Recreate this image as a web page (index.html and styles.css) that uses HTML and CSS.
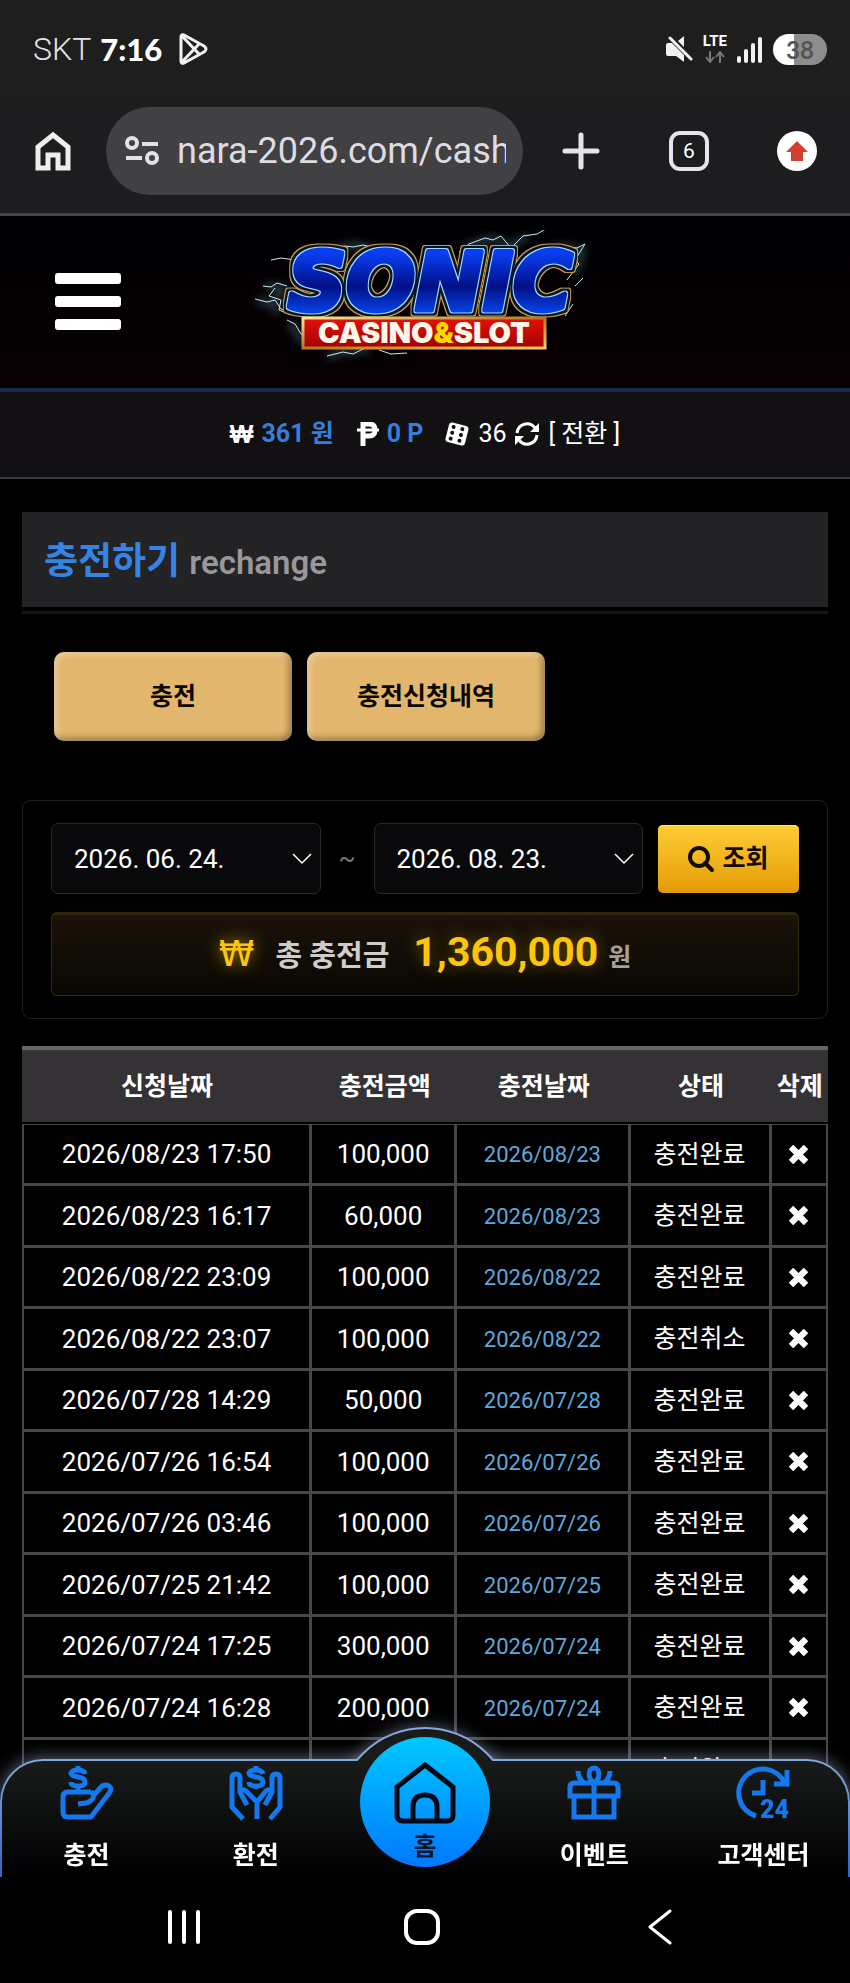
FILE: index.html
```html
<!DOCTYPE html>
<html lang="ko">
<head>
  <meta charset="UTF-8" />
  <meta name="viewport" content="width=device-width, initial-scale=1.0"/>
  <title>충전하기</title>
  <link rel="stylesheet" href="styles.css">
</head>
<body>

  <!-- shared icons -->
  <svg class="sprite" aria-hidden="true">
    <symbol id="x" viewBox="0 0 18 18"><path d="M4 4l10 10M14 4L4 14" stroke="#fff" stroke-width="6" stroke-linecap="square"/></symbol>
    <symbol id="down" viewBox="0 0 20 12"><path d="M1 1l9 9 9-9" fill="none" stroke="#fff" stroke-width="1.5"/></symbol>
  </svg>

  <div class="status">
    <span class="carrier">SKT</span>
    <span class="time">7:16</span>
    <svg class="play" width="30" height="32" viewBox="0 0 30 32" fill="none" stroke="#f0f0f0" stroke-width="3" stroke-linejoin="round"><path d="M2 4q0-3 3-2l20 11q4 3 0 6L5 30q-3 1-3-2zM3 3l17 18M3 29l17-18"/></svg>
    <div class="status-right">
      <svg width="28" height="28" viewBox="0 0 28 28"><path d="M1 10q0-2 2-2h4l12 12v7l-8-6H3q-2 0-2-2zM13 6l6-5v11z" fill="#f2f2f2"/><path d="M5 3l21 21" stroke="#f2f2f2" stroke-width="3" stroke-linecap="round"/></svg>
      <div class="lte">LTE
        <svg width="20" height="12" viewBox="0 0 20 12" fill="none" stroke="#777" stroke-width="2"><path d="M5 0v10M1 6l4 5 4-5M15 12V2M11 6l4-5 4 5"/></svg>
      </div>
      <svg width="26" height="27" viewBox="0 0 26 27" stroke="#f2f2f2" stroke-width="4" stroke-linecap="round"><path d="M2 22v3M9 15v10M16 9v16M23 3v22"/></svg>
      <span class="battery">38</span>
    </div>
  </div>

  <div class="browser">
    <button class="plain" aria-label="홈페이지"><svg width="42" height="42" viewBox="0 0 42 42" fill="none" stroke="#eee" stroke-width="5"><path d="M6 17L21 5l15 12v21H26V25H16v13H6z"/></svg></button>
    <div class="url">
      <svg width="34" height="30" viewBox="0 0 34 30" fill="none" stroke="#e3e1e6" stroke-width="4"><circle cx="7" cy="7" r="5"/><circle cx="27" cy="22" r="5"/><path d="M17 8h16M1 22h16"/></svg>
      <input type="text" value="nara-2026.com/cash" aria-label="주소">
    </div>
    <div class="browser-right">
      <button class="plain" aria-label="새 탭"><svg width="40" height="40" viewBox="0 0 40 40" stroke="#e6e4ea" stroke-width="5" stroke-linecap="round"><path d="M20 4v32M4 20h32"/></svg></button>
      <button class="tabs">6</button>
      <button class="plain" aria-label="업데이트"><svg width="40" height="40" viewBox="0 0 40 40"><circle cx="20" cy="20" r="20" fill="#fff"/><path d="M20 10l11 11h-5v9H14v-9H9z" fill="#d23f31"/></svg></button>
    </div>
  </div>

  <header class="header">
    <button class="menu" aria-label="메뉴"><span></span><span></span><span></span></button>
    <a href="#" class="logo" aria-label="SONIC CASINO&amp;SLOT">
      <svg width="344" height="134" viewBox="0 0 344 134">
        <defs>
          <linearGradient id="blue" x1="0" y1="0" x2="0" y2="1">
            <stop offset="0" stop-color="#0b45f5"/><stop offset=".2" stop-color="#0a3df0"/><stop offset=".55" stop-color="#020f86"/><stop offset=".85" stop-color="#0648f0"/>
          </linearGradient>
          <linearGradient id="gold" x1="0" y1="0" x2="1" y2="1">
            <stop offset="0" stop-color="#ffe19a"/><stop offset=".5" stop-color="#b87420"/><stop offset="1" stop-color="#ffd05c"/>
          </linearGradient>
          <linearGradient id="red" x1="0" y1="0" x2="0" y2="1">
            <stop offset="0" stop-color="#e31108"/><stop offset="1" stop-color="#a00303"/>
          </linearGradient>
          <filter id="glow" x="-20%" y="-30%" width="140%" height="160%"><feGaussianBlur stdDeviation="4"/></filter>
          <!-- light, dark and gold rims round the letters -->
          <filter id="rims" x="-10%" y="-20%" width="120%" height="140%" color-interpolation-filters="sRGB">
            <feMorphology in="SourceAlpha" operator="dilate" radius="1" result="a"/>
            <feFlood flood-color="#9fdcff"/><feComposite in2="a" operator="in" result="light"/>
            <feMorphology in="SourceAlpha" operator="dilate" radius="3" result="b"/>
            <feFlood flood-color="#061429"/><feComposite in2="b" operator="in" result="dark"/>
            <feMorphology in="SourceAlpha" operator="dilate" radius="4" result="c"/>
            <feFlood flood-color="#d09a48"/><feComposite in2="c" operator="in" result="rim"/>
            <feMerge><feMergeNode in="rim"/><feMergeNode in="dark"/><feMergeNode in="light"/><feMergeNode in="SourceGraphic"/></feMerge>
          </filter>
        </defs>
        <g fill="none" stroke="#7fb9cf" stroke-linejoin="round">
          <g stroke-width="4" opacity=".5" filter="url(#glow)">
            <path d="M4 70l14 4 8 8M12 56l18 2-8 14M84 18l18-3 18 4M210 18l28-10 18 8 20-10M300 16l30 4-8 24M74 126l20-5 22-2M36 92l16 22"/>
          </g>
          <path d="M2 69l12 3 8-2 6 9 10 4M10 56l8 1 6-4 10 3M22 58l-6 8 12 4-2 10 10 4M18 30l10-2 14 2M84 18l8-2 8 1 10-2 12 3M206 22l10-8 16-6 8 2 8-4 10 12 12-12 14-2 14-8M306 16l18 2 8-4-10 16 4 4-12 16M330 48l-8 8M74 126l16-4 10 2 12-6M126 120l12 4 16-1M34 90l8 4 6 10 14 8-6 6M320 74l-8 12" stroke="#c8ecf5" stroke-width="1"/>
        </g>
        <text class="logo-name" x="35" y="80">SONIC</text>
        <rect x="50" y="88" width="242" height="30" fill="url(#red)" stroke="url(#gold)" stroke-width="3"/>
        <text class="logo-sub" x="171" y="113">CASINO<tspan fill="#ffd800">&amp;</tspan>SLOT</text>
      </svg>
    </a>
  </header>

  <div class="balance">
    <span class="icon-won">₩</span><b>361 원</b>
    <svg class="peso" width="22" height="24" viewBox="0 0 22 24" fill="none" stroke="#fff"><path d="M6 24V2h6q6 0 6 6t-6 6H6" stroke-width="5"/><path d="M0 8h22" stroke-width="3"/></svg><b>0 P</b>
    <svg class="dice" width="24" height="24" viewBox="0 0 24 24"><g transform="rotate(14 12 12)"><rect x="2" y="2" width="20" height="20" rx="3" fill="#fff"/><g fill="#121013"><circle cx="7" cy="6" r="2"/><circle cx="7" cy="12" r="2"/><circle cx="7" cy="18" r="2"/><circle cx="16" cy="6" r="2"/><circle cx="16" cy="12" r="2"/><circle cx="16" cy="18" r="2"/></g></g></svg><span>36</span>
    <svg class="sync" width="24" height="24" viewBox="0 0 24 24"><path d="M2 11a10 10 0 0 1 18-5M22 13a10 10 0 0 1-18 5" fill="none" stroke="#fff" stroke-width="3"/><path d="M24 1v9h-9zM0 23v-9h9z" fill="#fff"/></svg><a href="#">[ 전환 ]</a>
  </div>

  <main>
    <div class="title">
      <h1>충전하기 <small>rechange</small></h1>
    </div>

    <div class="tab-row">
      <button>충전</button>
      <button>충전신청내역</button>
    </div>

    <form class="search">
      <div class="search-row">
        <div class="date">
          <select aria-label="시작일"><option>2026. 06. 24.</option></select>
          <svg width="20" height="12"><use href="#down"/></svg>
        </div>
        <span class="tilde">~</span>
        <div class="date">
          <select aria-label="종료일"><option>2026. 08. 23.</option></select>
          <svg width="20" height="12"><use href="#down"/></svg>
        </div>
        <button type="button" class="submit">
          <svg width="26" height="26" viewBox="0 0 26 26" fill="none" stroke="#120b00" stroke-width="4"><circle cx="11" cy="11" r="9"/><path d="M17 17l7 7" stroke-linecap="round"/></svg>
          조회
        </button>
      </div>
      <div class="total">
        <span class="won">₩</span>
        <span class="total-label">총 충전금</span>
        <strong>1,360,000</strong>
        <span class="unit">원</span>
      </div>
    </form>

    <table>
      <colgroup><col class="c1"><col class="c2"><col class="c3"><col class="c4"><col class="c5"></colgroup>
      <thead>
        <tr><th>신청날짜</th><th>충전금액</th><th>충전날짜</th><th>상태</th><th>삭제</th></tr>
      </thead>
      <tbody>
        <tr><td>2026/08/23 17:50</td><td>100,000</td><td class="day">2026/08/23</td><td>충전완료</td><td><button class="del" aria-label="삭제"><svg width="19" height="19"><use href="#x"/></svg></button></td></tr>
        <tr><td>2026/08/23 16:17</td><td>60,000</td><td class="day">2026/08/23</td><td>충전완료</td><td><button class="del" aria-label="삭제"><svg width="19" height="19"><use href="#x"/></svg></button></td></tr>
        <tr><td>2026/08/22 23:09</td><td>100,000</td><td class="day">2026/08/22</td><td>충전완료</td><td><button class="del" aria-label="삭제"><svg width="19" height="19"><use href="#x"/></svg></button></td></tr>
        <tr><td>2026/08/22 23:07</td><td>100,000</td><td class="day">2026/08/22</td><td>충전취소</td><td><button class="del" aria-label="삭제"><svg width="19" height="19"><use href="#x"/></svg></button></td></tr>
        <tr><td>2026/07/28 14:29</td><td>50,000</td><td class="day">2026/07/28</td><td>충전완료</td><td><button class="del" aria-label="삭제"><svg width="19" height="19"><use href="#x"/></svg></button></td></tr>
        <tr><td>2026/07/26 16:54</td><td>100,000</td><td class="day">2026/07/26</td><td>충전완료</td><td><button class="del" aria-label="삭제"><svg width="19" height="19"><use href="#x"/></svg></button></td></tr>
        <tr><td>2026/07/26 03:46</td><td>100,000</td><td class="day">2026/07/26</td><td>충전완료</td><td><button class="del" aria-label="삭제"><svg width="19" height="19"><use href="#x"/></svg></button></td></tr>
        <tr><td>2026/07/25 21:42</td><td>100,000</td><td class="day">2026/07/25</td><td>충전완료</td><td><button class="del" aria-label="삭제"><svg width="19" height="19"><use href="#x"/></svg></button></td></tr>
        <tr><td>2026/07/24 17:25</td><td>300,000</td><td class="day">2026/07/24</td><td>충전완료</td><td><button class="del" aria-label="삭제"><svg width="19" height="19"><use href="#x"/></svg></button></td></tr>
        <tr><td>2026/07/24 16:28</td><td>200,000</td><td class="day">2026/07/24</td><td>충전완료</td><td><button class="del" aria-label="삭제"><svg width="19" height="19"><use href="#x"/></svg></button></td></tr>
        <tr><td></td><td></td><td class="day"></td><td>충전완료</td><td></td></tr>
      </tbody>
    </table>
  </main>

  <footer class="bottom">
    <nav class="dock">
      <a href="#">
        <svg width="54" height="54" viewBox="0 0 54 54"><path d="M31 26H8q-5 0-5 5v15q0 5 5 5h23l19-25q2-4-1-6t-7 0L33 30M31 26q4 2 2 6t-7 5l-8 1M25 8q-1-4-7-4t-7 3q0 3 7 4t7 5q0 4-7 4t-7-4M18 0v4M18 20v6"/></svg>
        충전
      </a>
      <a href="#">
        <svg width="54" height="54" viewBox="0 0 54 54"><path d="M14 53L3 41V12q0-4 4-4t4 4v14l7 13M11 24q4-1 6 1l11 11v17M41 53l10-12V12q0-4-4-4t-4 4v14l-7 13M43 24q-4-1-6 1L28 36M34 8q-1-4-7-4t-7 3q0 3 7 4t7 5q0 4-7 4t-7-4M27 0v4M27 20v3"/></svg>
        환전
      </a>
      <a href="#" class="home">
        <svg width="64" height="64" viewBox="0 0 64 64"><path d="M32 4L4 26v28q0 6 6 6h44q6 0 6-6V26zM20 60V46q0-12 12-12t12 12v14"/></svg>
        홈
      </a>
      <a href="#">
        <svg width="54" height="54" viewBox="0 0 54 54"><path d="M3 30V21q0-4 4-4h40q4 0 4 4v9zM7 30v21h40V30M27 17v34M27 17c-7-5-6-15 0-15s7 10 0 15M11 5q0 7 6 12M43 5q0 7-6 12"/></svg>
        이벤트
      </a>
      <a href="#">
        <svg width="54" height="54" viewBox="0 0 54 54"><path d="M20 50A24 24 0 1 1 49 18M51 4v14H38M27 14v13H16"/><text x="24" y="52">24</text></svg>
        고객센터
      </a>
    </nav>
    <div class="system">
      <button class="plain" aria-label="최근 앱"><svg width="36" height="36" viewBox="0 0 36 36" stroke="#fff" stroke-width="4" stroke-linecap="round"><path d="M4 3v30M18 3v30M32 3v30"/></svg></button>
      <button class="plain" aria-label="홈 화면"><svg width="36" height="36" viewBox="0 0 36 36" fill="none" stroke="#fff" stroke-width="4"><rect x="2" y="2" width="32" height="32" rx="11"/></svg></button>
      <button class="plain" aria-label="뒤로"><svg width="36" height="36" viewBox="0 0 36 36" fill="none" stroke="#fff" stroke-width="3" stroke-linecap="round" stroke-linejoin="round"><path d="M28 2L8 18l20 16"/></svg></button>
    </div>
  </footer>

</body>
</html>
```
FILE: styles.css
```css
*, *::before, *::after {
  box-sizing: border-box;
}

* {
  margin: 0;
}

body {
  min-height: 100vh;
  background: #000;
  color: #fff;
  font-family: Roboto, "Noto Sans CJK KR", sans-serif;
  font-size: 25px;
  line-height: 36px;
}

svg {
  display: block;
  flex: none;
}

input, button, select {
  font: inherit;
  color: inherit;
}

button {
  border: none;
  padding: 0;
  cursor: pointer;
}

a {
  color: inherit;
  text-decoration: none;
}

.sprite {
  position: absolute;
  width: 0;
  height: 0;
}

.plain {
  background: none;
}

/* phone status bar */
.status {
  display: flex;
  align-items: center;
  height: 98px;
  padding: 0 23px 0 33px;
  background: #1e1e1e;
}

.carrier {
  font-size: 32px;
  font-weight: 300;
  color: #e4e4e4;
}

.time {
  margin-left: 9px;
  font-family: Lato, sans-serif;
  font-size: 31px;
  font-weight: 900;
}

.play {
  margin-left: 17px;
}

.status-right {
  display: flex;
  align-items: center;
  gap: 10px;
  margin-left: auto;
}

.lte {
  display: flex;
  flex-direction: column;
  align-items: center;
  gap: 3px;
  font-size: 15px;
  font-weight: 700;
  line-height: 13px;
}

.battery {
  width: 54px;
  height: 31px;
  border-radius: 16px;
  background: linear-gradient(90deg, #fff 39%, #8d8d8d 39%);
  color: #555;
  font-family: Lato, sans-serif;
  font-size: 24px;
  font-weight: 700;
  line-height: 31px;
  text-align: center;
}

/* address bar */
.browser {
  display: flex;
  align-items: center;
  height: 118px;
  padding: 0 33px 9px 32px;
  background: #1d1c1f;
  border-bottom: 3px solid #434345;
}

.url {
  flex: 1;
  min-width: 0;
  display: flex;
  align-items: center;
  height: 88px;
  margin: 0 38px 0 32px;
  padding: 0 17px 0 19px;
  border-radius: 44px;
  background: #414043;
}

.url input {
  flex: 1;
  min-width: 0;
  margin-left: 18px;
  padding: 0;
  border: none;
  outline: none;
  background: none;
  color: #dedce2;
  font-size: 36px;
}

.browser-right {
  display: flex;
  gap: 68px;
}

.tabs {
  width: 40px;
  height: 40px;
  border: 4px solid #e6e4ea;
  border-radius: 11px;
  background: none;
  font-size: 21px;
  line-height: 32px;
}

/* site header */
.header {
  display: grid;
  grid-template-columns: 1fr auto 1fr;
  align-items: center;
  height: 176px;
  padding: 0 55px 2px;
  background: linear-gradient(#000003, #080002);
  border-bottom: 4px solid #1b2850;
}

.menu {
  display: flex;
  flex-direction: column;
  gap: 12px;
  width: 66px;
  background: none;
}

.menu span {
  width: 100%;
  height: 11px;
  border-radius: 3px;
  background: #fff;
}

.logo {
  padding-bottom: 8px;
}

.logo-name {
  fill: url(#blue);
  stroke: url(#blue);
  stroke-width: 5px;
  stroke-linejoin: round;
  filter: url(#rims);
  font-family: "DejaVu Sans", sans-serif;
  font-size: 81px;
  font-weight: 700;
  font-style: italic;
}

.logo-sub {
  fill: #fff8ea;
  font-family: Inter, sans-serif;
  font-size: 29px;
  font-weight: 900;
  text-anchor: middle;
}

.balance {
  display: flex;
  justify-content: center;
  align-items: center;
  height: 87px;
  padding-bottom: 2px;
  background: #121013;
  border-bottom: 2px solid #39393b;
}

.balance b {
  margin-left: 8px;
  color: #347fdc;
}

.icon-won {
  font-family: "Liberation Sans", sans-serif;
  font-weight: 700;
}

.peso {
  margin-left: 23px;
}

.dice {
  margin-left: 22px;
}

.balance span:not(.icon-won) {
  margin-left: 9px;
}

.sync {
  margin: 0 9px;
}

/* page */
main {
  padding: 33px 22px 0;
}

.title {
  padding-bottom: 4px;
  border-bottom: 3px solid #151517;
}

.title h1 {
  padding: 0 22px;
  background: #232225;
  color: #3584e4;
  font-size: 37px;
  line-height: 99px;
  height: 95px;
}

.title small {
  color: #98979b;
  font-size: 33px;
  font-weight: 600;
}

.tab-row {
  display: flex;
  gap: 15px;
  padding: 38px 32px 59px;
}

.tab-row button {
  width: 238px;
  height: 89px;
  border-radius: 10px;
  background: #e2b66c;
  box-shadow: inset 3px 3px 6px rgba(255, 255, 255, 0.35), inset -3px -3px 6px rgba(0, 0, 0, 0.35);
  color: #0c0700;
  font-weight: 700;
}

.search {
  padding: 22px 28px;
  border: 1px solid #202022;
  border-radius: 9px;
}

.search-row {
  display: flex;
  align-items: center;
  margin-bottom: 18px;
}

.date {
  flex: 1;
  display: grid;
  align-items: center;
}

.date select,
.date svg {
  grid-area: 1 / 1;
}

.date svg {
  justify-self: end;
  margin-right: 9px;
  pointer-events: none;
}

.date select {
  appearance: none;
  width: 100%;
  height: 71px;
  padding: 0 22px;
  border: 1px solid #29292c;
  border-radius: 7px;
  background: #09080b;
  font-size: 26px;
}

.tilde {
  width: 53px;
  color: #77777b;
  text-align: center;
}

.submit {
  display: flex;
  justify-content: center;
  align-items: center;
  gap: 8px;
  width: 141px;
  height: 68px;
  margin-left: 15px;
  border-radius: 5px;
  background: linear-gradient(#ffcd36, #e59a06);
  box-shadow: inset 0 1px 0 #ffe285;
  color: #120b00;
  font-weight: 700;
}

.total {
  display: flex;
  justify-content: center;
  align-items: baseline;
  height: 84px;
  padding-top: 16px;
  border: 1px solid #302a0d;
  border-top: 3px solid #2e250e;
  border-radius: 6px;
  background: linear-gradient(#1b120a, #090702);
  line-height: 42px;
}

.won {
  color: #ffc40c;
  font-family: "DejaVu Sans", sans-serif;
  font-size: 36px;
  text-shadow: 0 0 16px #a58300;
}

.total-label {
  margin: 0 24px 0 21px;
  color: #cfcdcc;
  font-size: 29px;
  font-weight: 700;
}

.total strong {
  color: #ffc40c;
  font-size: 41px;
  text-shadow: 0 0 16px #6b5600;
}

.unit {
  margin-left: 10px;
  color: #a5a197;
  font-weight: 700;
}

/* history table */
table {
  width: 100%;
  margin-top: 27px;
  border-spacing: 0;
  table-layout: fixed;
  text-align: center;
}

.c1 { width: 36%; }
.c2 { width: 18%; }
.c3 { width: 21.5%; }
.c4 { width: 17.5%; }
.c5 { width: 7%; }

th {
  height: 78px;
  padding: 2px 0 0;
  background: #343235;
  border-top: 4px solid #656467;
  border-bottom: 2px solid #000;
}

td {
  height: 61px;
  padding: 0;
  border-right: 3px solid #48464a;
  border-bottom: 3px solid #48464a;
  font-size: 26px;
}

tr:nth-child(even) td,
tbody tr:first-child td {
  height: 62px;
}

tbody tr:first-child td {
  border-top: 1px solid #48464a;
}

td:first-child {
  border-left: 2px solid #48464a;
}

td:last-child {
  border-right-width: 2px;
}

td:nth-child(4) {
  padding-top: 1px;
  font-size: 25px;
}

td.day {
  padding-top: 2px;
  color: #5da9dd;
  font-size: 22px;
}

.del {
  display: block;
  margin: 0 auto;
  background: none;
}

/* fixed bottom menu */
.bottom {
  position: fixed;
  left: 0;
  right: 0;
  bottom: 0;
}

.dock {
  display: grid;
  grid-template-columns: repeat(5, 1fr);
  position: relative;
  height: 118px;
  border: 2px solid transparent;
  border-bottom: none;
  border-radius: 43px 43px 0 0;
  background: linear-gradient(#191b1b, #000) padding-box, linear-gradient(#86a8dc, #2c68c4) border-box;
  box-shadow: 0 -2px 16px rgba(160, 180, 215, 0.5);
}

/* raised arc behind the home button */
.dock::before {
  content: "";
  position: absolute;
  top: -34px;
  left: calc(50% - 89px);
  width: 178px;
  height: 178px;
  border: 2px solid #86a8dc;
  border-radius: 50%;
  background: #191b1b;
  box-shadow: 0 0 16px rgba(160, 180, 215, 0.5);
  clip-path: inset(-24px -24px 144px -24px);
}

.dock a {
  display: flex;
  flex-direction: column;
  align-items: center;
  gap: 18px;
  padding-top: 5px;
  font-weight: 700;
}

.dock svg {
  overflow: visible;
  fill: none;
  stroke: #1478ee;
  stroke-width: 5;
}

.dock text {
  fill: #1478ee;
  stroke: none;
  font-size: 25px;
  font-weight: 900;
}

.dock .home {
  position: relative;
  justify-self: center;
  gap: 4px;
  width: 130px;
  height: 130px;
  margin-top: -24px;
  padding-top: 24px;
  border-radius: 50%;
  background: linear-gradient(#00c8ff, #0078ff);
  color: #031328;
}

.dock .home svg {
  stroke: #000814;
}

.system {
  display: grid;
  grid-template-columns: repeat(3, 1fr);
  justify-items: center;
  align-items: center;
  position: relative;
  height: 106px;
  padding: 0 71px 6px 65px;
  background: #000;
}
```
